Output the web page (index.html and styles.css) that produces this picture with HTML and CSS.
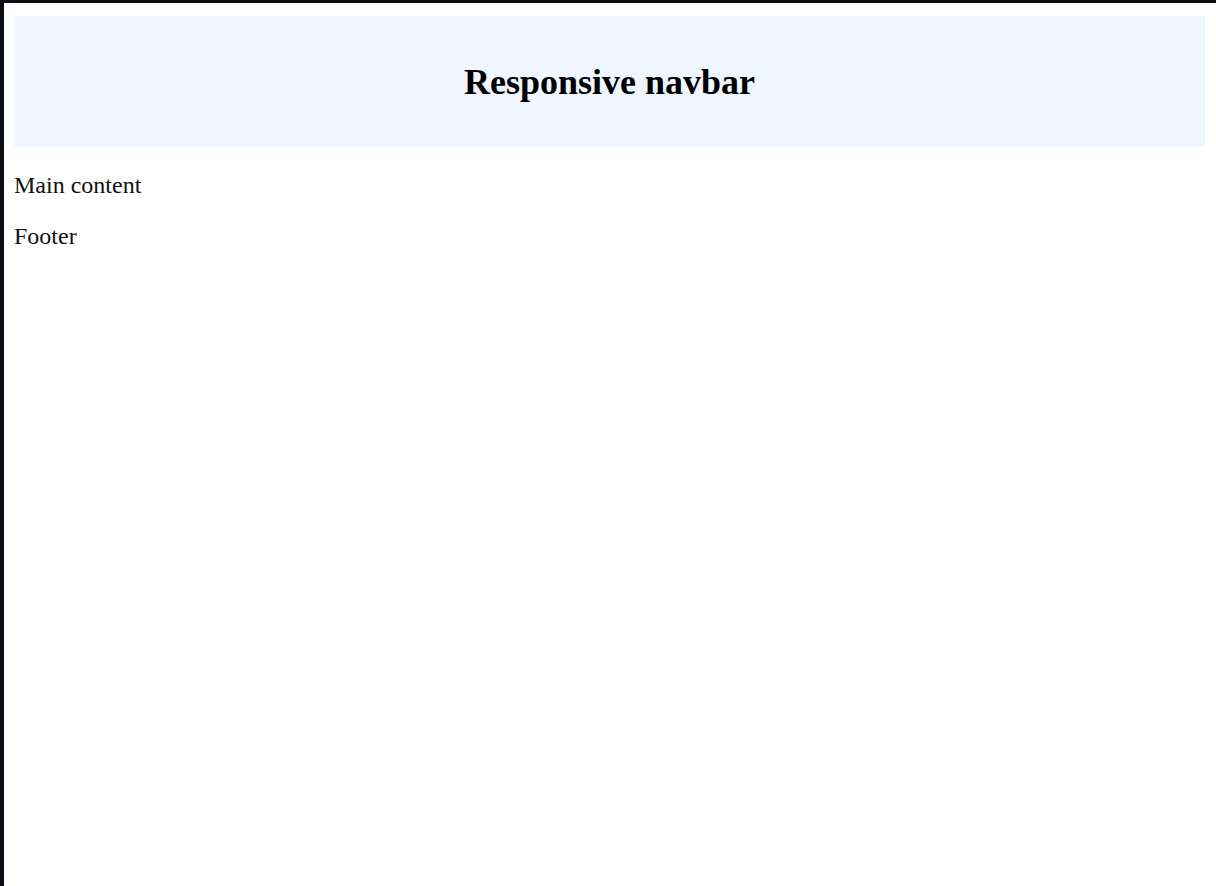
FILE: index.html
```html
<!DOCTYPE html>
<html lang="en">
<head>
<meta charset="utf-8">
<title>Responsive navbar</title>
<link rel="stylesheet" href="styles.css">
</head>
<body>
<div class="page">
  <header class="site-header">
    <h1 class="site-title">Responsive navbar</h1>
  </header>
  <main class="main">
    <p class="text">Main content</p>
  </main>
  <footer class="footer">
    <p class="text">Footer</p>
  </footer>
</div>
</body>
</html>
```

FILE: styles.css
```css
html, body {
  margin: 0;
  padding: 0;
  height: 100%;
  background: #0b0e13;
}
.page {
  box-sizing: border-box;
  margin: 3px 0 0 4px;
  min-height: calc(100% - 3px);
  background: #ffffff;
  padding: 13px 11px 0 10px;
  font-family: "Liberation Serif", "Times New Roman", serif;
  font-size: 24px;
  color: #111111;
  display: flow-root;
}
.site-header {
  box-sizing: border-box;
  background: #eff6ff;
  height: 131px;
  padding-top: 2px;
  display: flex;
  align-items: center;
  justify-content: center;
}
.site-title {
  margin: 0;
  font-size: 36px;
  font-weight: bold;
  line-height: 41px;
  color: #000000;
}
.text {
  margin: 0;
  line-height: 28px;
}
.main .text {
  margin-top: 24px;
}
.footer .text {
  margin-top: 23px;
}
```
